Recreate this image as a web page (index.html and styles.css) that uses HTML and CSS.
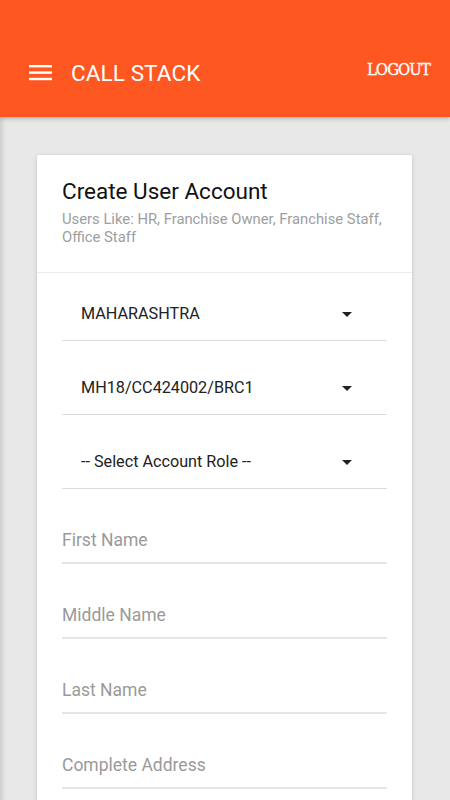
FILE: index.html
```html
<!DOCTYPE html>
<html lang="en">
<head>
<meta charset="utf-8">
<title>Call Stack - Create User Account</title>
<link rel="stylesheet" href="styles.css">
</head>
<body>
<header class="appbar">
  <div class="toolbar">
    <button class="menu-btn" aria-label="Menu">
      <svg width="24" height="16" viewBox="0 0 24 16"><rect x="0" y="0" width="23" height="2.4" fill="#fff"/><rect x="0" y="6.4" width="23" height="2.4" fill="#fff"/><rect x="0" y="12.8" width="23" height="2.4" fill="#fff"/></svg>
    </button>
    <h1 class="app-title">CALL STACK</h1>
    <a class="logout" href="#">LOGOUT</a>
  </div>
</header>

<main class="content">
  <section class="card">
    <div class="card-head">
      <h2 class="card-title">Create User Account</h2>
      <p class="card-sub">Users Like: HR, Franchise Owner, Franchise Staff, Office Staff</p>
    </div>
    <form class="form">
      <div class="select-field">
        <span class="select-value">MAHARASHTRA</span>
        <svg class="caret" width="10" height="5" viewBox="0 0 10 5"><path d="M0 0h10L5 5z" fill="#222"/></svg>
      </div>
      <div class="select-field">
        <span class="select-value">MH18/CC424002/BRC1</span>
        <svg class="caret" width="10" height="5" viewBox="0 0 10 5"><path d="M0 0h10L5 5z" fill="#222"/></svg>
      </div>
      <div class="select-field">
        <span class="select-value">-- Select Account Role --</span>
        <svg class="caret" width="10" height="5" viewBox="0 0 10 5"><path d="M0 0h10L5 5z" fill="#222"/></svg>
      </div>
      <div class="text-field"><input type="text" placeholder="First Name"></div>
      <div class="text-field"><input type="text" placeholder="Middle Name"></div>
      <div class="text-field"><input type="text" placeholder="Last Name"></div>
      <div class="text-field"><input type="text" placeholder="Complete Address"></div>
    </form>
  </section>
</main>
</body>
</html>
```

FILE: styles.css
```css
* {
  box-sizing: border-box;
}

html, body {
  margin: 0;
  padding: 0;
}

body {
  font-family: Roboto, "Noto Sans", sans-serif;
  background: #e8e8e8;
  color: #212121;
  min-height: 800px;
  overflow: hidden;
}

/* App bar */
.appbar {
  position: relative;
  z-index: 2;
  height: 117px;
  background: #ff5722;
  box-shadow: 0 2px 4px rgba(0, 0, 0, 0.22);
}

.toolbar {
  display: flex;
  align-items: center;
  height: 100%;
  padding: 28px 20px 0 29px;
}

.menu-btn {
  display: flex;
  padding: 0;
  margin: 0 18px 0 0;
  border: 0;
  background: none;
}

.app-title {
  flex: 1;
  margin: 0;
  font-size: 22.5px;
  font-weight: 400;
  color: #fff;
  letter-spacing: 0.1px;
}

.logout {
  margin-top: -6px;
  font-family: "DejaVu Serif Condensed", "DejaVu Serif", serif;
  font-stretch: condensed;
  font-weight: 400;
  font-size: 16.5px;
  letter-spacing: -0.9px;
  -webkit-text-stroke: 0.35px #fff;
  color: #fff;
  text-decoration: none;
}

/* Page body */
.content {
  min-height: 683px;
  padding: 38px 38px 0 37px;
  box-shadow: inset 6px 0 5px -4px rgba(0, 0, 0, 0.14);
}

.card {
  background: #fff;
  border-radius: 2px;
  min-height: 660px;
  box-shadow: 0 1px 4px rgba(0, 0, 0, 0.16), 0 2px 2px rgba(0, 0, 0, 0.06);
}

.card-head {
  padding: 23px 25px 26px;
  border-bottom: 1px solid #ebebeb;
}

.card-title {
  margin: 0;
  font-size: 22.5px;
  line-height: 26px;
  font-weight: 400;
  color: #111;
}

.card-sub {
  margin: 6px 0 0;
  font-size: 14.8px;
  line-height: 18px;
  color: #9e9e9e;
}

/* Form */
.form {
  padding: 2px 25px 0;
}

.select-field {
  display: flex;
  align-items: center;
  justify-content: space-between;
  height: 66px;
  padding: 11px 35px 0 19px;
  margin-bottom: 8px;
  border-bottom: 1px solid #dcdcdc;
}

.select-value {
  font-size: 16.2px;
  color: #222;
}

.caret {
  display: block;
  margin-top: 3px;
}

.text-field {
  display: flex;
  align-items: center;
  height: 67px;
  padding-top: 21px;
  margin-bottom: 8px;
  border-bottom: 2px solid #e6e6e6;
}

.text-field input {
  width: 100%;
  padding: 0;
  border: 0;
  outline: none;
  background: transparent;
  font-family: Roboto, "Noto Sans", sans-serif;
  font-size: 17.5px;
  color: #222;
}

.text-field input::placeholder {
  color: #9a9a9a;
}
```
